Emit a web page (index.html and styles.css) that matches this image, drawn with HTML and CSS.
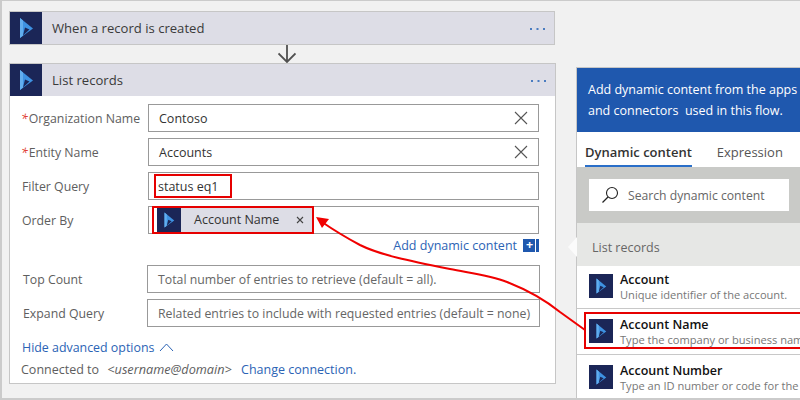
FILE: index.html
```html
<!DOCTYPE html>
<html>

<head>
    <title>List records</title>
    <link rel="stylesheet" href="styles.css">
</head>

<body>
    <svg width="0" height="0" class="defs">
        <symbol id="dynamics" viewBox="0 0 32 32">
            <rect width="32" height="32" fill="#1b2657"/>
            <polygon points="10,6 23,16.5 10,26" fill="#3e92e2"/>
            <polygon points="10,6 13,8.500 13,23.500 10,26" fill="#62aeef"/>
            <polygon points="13,23.500 19.500,17.500 15,15.500" fill="#1b2657"/>
        </symbol>
        <symbol id="more" viewBox="0 0 16 2">
            <rect x="0" width="2" height="2" fill="#4a7cc0"/>
            <rect x="6.500" width="2" height="2" fill="#4a7cc0"/>
            <rect x="13" width="2" height="2" fill="#4a7cc0"/>
        </symbol>
    </svg>

    <div class="page">
        <div class="flow">
            <div class="card">
                <div class="card-head">
                    <svg class="logo"><use href="#dynamics"/></svg>
                    <span class="card-title">When a record is created</span>
                    <svg class="dots"><use href="#more"/></svg>
                </div>
            </div>

            <div class="connector">
                <svg width="18" height="18" viewBox="0 0 18 18">
                    <path d="M9 0V17M0.500 8.500L9 17L17.500 8.500" fill="none" stroke="#505050" stroke-width="1.800"/>
                </svg>
            </div>

            <div class="card card-open">
                <div class="card-head">
                    <svg class="logo"><use href="#dynamics"/></svg>
                    <span class="card-title">List records</span>
                    <svg class="dots"><use href="#more"/></svg>
                </div>
                <div class="card-body">
                    <div class="row">
                        <label><i>*</i>Organization Name</label>
                        <div class="field">Contoso
                            <svg class="clear" viewBox="0 0 14 14"><path d="M1 1L13 13M13 1L1 13"/></svg>
                        </div>
                    </div>
                    <div class="row">
                        <label><i>*</i>Entity Name</label>
                        <div class="field">Accounts
                            <svg class="clear" viewBox="0 0 14 14"><path d="M1 1L13 13M13 1L1 13"/></svg>
                        </div>
                    </div>
                    <div class="row">
                        <label>Filter Query</label>
                        <div class="field"><span class="mark-text">status eq1</span></div>
                    </div>
                    <div class="row">
                        <label>Order By</label>
                        <div class="field field-token">
                            <span class="mark-token">
                                <span class="token">
                                    <svg class="token-logo"><use href="#dynamics"/></svg>
                                    <span class="token-name">Account Name</span>
                                    <svg class="token-x" viewBox="0 0 8 8"><path d="M1 1L7 7M7 1L1 7"/></svg>
                                </span>
                            </span>
                        </div>
                    </div>
                    <div class="add-row">
                        <a class="link">Add dynamic content</a>
                        <span class="add-btn">+</span>
                    </div>
                    <div class="row row-wide">
                        <label>Top Count</label>
                        <div class="field hint">Total number of entries to retrieve (default = all).</div>
                    </div>
                    <div class="row row-wide">
                        <label>Expand Query</label>
                        <div class="field hint">Related entries to include with requested entries (default = none)</div>
                    </div>
                    <div class="advanced">
                        <a class="link">Hide advanced options</a>
                        <svg width="15" height="9" viewBox="0 0 15 9"><path d="M1 8L7.500 1L14 8" fill="none" stroke="#2b63b5"/></svg>
                    </div>
                    <div class="connected">
                        Connected to <em>&lt;username@domain&gt;</em> <a class="link">Change connection.</a>
                    </div>
                </div>
            </div>
        </div>

        <div class="panel">
            <div class="panel-head">Add dynamic content from the apps<br>and connectors&nbsp; used in this flow.</div>
            <div class="tabs">
                <span class="tab tab-on">Dynamic content</span>
                <span class="tab">Expression</span>
            </div>
            <div class="search-wrap">
                <div class="search">
                    <svg width="18" height="18" viewBox="0 0 18 18">
                        <circle cx="11" cy="7" r="5.500" fill="none" stroke="#222" stroke-width="1.100"/>
                        <path d="M7 11L1.500 16.500" stroke="#222" stroke-width="1.300"/>
                    </svg>
                    <span>Search dynamic content</span>
                </div>
            </div>
            <div class="list-head">List records</div>
            <div class="item">
                <svg class="item-logo"><use href="#dynamics"/></svg>
                <div class="item-text">
                    <b>Account</b>
                    <span>Unique identifier of the account.</span>
                </div>
            </div>
            <div class="item item-marked">
                <svg class="item-logo"><use href="#dynamics"/></svg>
                <div class="item-text">
                    <b>Account Name</b>
                    <span>Type the company or business name.</span>
                </div>
            </div>
            <div class="item item-last">
                <svg class="item-logo"><use href="#dynamics"/></svg>
                <div class="item-text">
                    <b>Account Number</b>
                    <span>Type an ID number or code for the account.</span>
                </div>
            </div>
        </div>

        <!-- red callout from the list item back to the field -->
        <svg class="callout" width="800" height="400" viewBox="0 0 800 400">
            <path d="M585 330L560 312C545 300 530 291 507 282C490 275 470 273 450 269C410 261 380 255 360 245C345 237 335 231 322 222" fill="none" stroke="#f00000" stroke-width="2"/>
            <polygon points="316,217 329,219 322,228" fill="#f00000"/>
        </svg>
    </div>
</body>

</html>
```

FILE: styles.css
```css
html, body {
    margin: 0;
    height: 100%;
    overflow: hidden;
}

body {
    font-family: "Open Sans", "Noto Sans", sans-serif;
    font-size: 12.5px;
    color: #444;
}

.defs {
    display: none;
}

.page {
    position: relative;
    display: flex;
    box-sizing: border-box;
    width: 800px;
    height: 400px;
    overflow: hidden;
    background-color: #f1f1f1;
    border-top: 1px solid #cbcbcb;
    border-left: 2px solid #cbcbcb;
    border-bottom: 2px solid #cbcbcb;
}

.flow {
    width: 547px;
    margin: 10px 0 0 7px;
    flex-shrink: 0;
}

/* cards */
.card {
    width: 546px;
    box-sizing: border-box;
    border: 1px solid #c6c6c6;
}

.card-open {
    width: 547px;
    background-color: #fff;
}

.card-head {
    display: flex;
    align-items: center;
    height: 32px;
    background-color: #dddde6;
}

.logo {
    width: 32px;
    height: 32px;
}

.card-title {
    margin-left: 10px;
    font-size: 13.1px;
    color: #3a3a3a;
}

.dots {
    width: 16px;
    height: 2px;
    margin-left: auto;
    margin-right: 8px;
    margin-top: 1px;
}

.connector {
    display: flex;
    height: 18px;
    padding-left: 269px;
}

.card-body {
    box-sizing: border-box;
    height: 287px;
    padding: 8px 0 0 12px;
}

/* form rows */
.row {
    display: flex;
    align-items: center;
    height: 28px;
    margin-bottom: 6px;
}

.row label {
    width: 126px;
    font-size: 12.3px;
    color: #5e5e5e;
}

.row label i {
    margin-left: -1px;
    margin-right: 1px;
    color: #e0352b;
}

.field {
    display: flex;
    align-items: center;
    box-sizing: border-box;
    width: 391px;
    height: 28px;
    padding: 0 10px;
    background-color: #fff;
    border: 1px solid #999;
    color: #333;
}

.clear {
    width: 14px;
    height: 14px;
    margin-left: auto;
    fill: none;
    stroke: #555;
    stroke-width: 1.100;
}

.mark-text {
    margin-left: -5px;
    padding: 2px 11px 1px 2px;
    border: 2px solid #e60000;
}

.field-token {
    padding: 0 0 0 3px;
}

.mark-token {
    display: block;
    margin-top: -1px;
    border: 2px solid #e60000;
}

.token {
    display: flex;
    align-items: center;
    width: 155px;
    height: 24px;
    margin-left: 3px;
    background-color: #dddde6;
}

.token-logo {
    width: 24px;
    height: 24px;
}

.token-name {
    margin-left: 13px;
}

.token-x {
    width: 8px;
    height: 8px;
    margin-left: auto;
    margin-right: 8px;
    fill: none;
    stroke: #444;
    stroke-width: 1.100;
}

.link {
    color: #2b63b5;
}

.add-row {
    display: flex;
    align-items: center;
    justify-content: flex-end;
    height: 12px;
    width: 517px;
    margin-top: -1px;
    margin-bottom: 14px;
}

.add-btn {
    box-sizing: border-box;
    width: 16px;
    height: 13px;
    margin-left: 6px;
    padding-right: 3px;
    line-height: 12px;
    text-align: center;
    font-weight: 700;
    color: #fff;
    background-color: #1f58ae;
    box-shadow: inset -3px 0 0 #1f58ae, inset -4px 0 0 #fff;
}

.row-wide {
    margin-left: 1px;
}

.row-wide label {
    width: 124px;
}

.row-wide .field {
    width: 393px;
    font-size: 12.3px;
}

.hint {
    white-space: nowrap;
    color: #666;
}

.advanced {
    display: flex;
    align-items: center;
    gap: 5px;
    margin: 12px 0 0 0;
    font-size: 12.4px;
}

.connected {
    margin: 4px 0 0 -1px;
    color: #5e5e5e;
}

.connected em {
    margin: 0 6px 0 5px;
    font-size: 12.7px;
}

/* dynamic content panel */
.panel {
    position: relative;
    width: 224px;
    margin: 66px 0 0 20px;
    flex-shrink: 0;
    border-top: 1px solid #c6c6c6;
    border-left: 1px solid #c6c6c6;
    background-color: #fff;
}

.panel-head {
    box-sizing: border-box;
    height: 64px;
    padding: 11px 0 0 11px;
    line-height: 21px;
    white-space: nowrap;
    font-weight: 500;
    color: #fff;
    background-color: #1f58ae;
}

.tabs {
    display: flex;
    gap: 25px;
    height: 35px;
    padding-left: 8px;
    font-size: 13px;
    color: #555;
}

.tab {
    box-sizing: border-box;
    height: 35px;
    padding-top: 11px;
}

.tab-on {
    font-weight: 600;
    color: #333;
    border-bottom: 2px solid #2a6fc9;
}

.search-wrap {
    height: 32px;
    padding: 12px;
    background-color: #c9cac7;
}

.search {
    display: flex;
    align-items: center;
    gap: 9px;
    height: 32px;
    padding-left: 12px;
    font-size: 12.2px;
    background-color: #fff;
    color: #666;
}

.list-head {
    box-sizing: border-box;
    height: 43px;
    padding: 16px 0 0 15px;
    background-color: #e6e7e5;
    color: #666;
}

/* little arrow pointing at the add link */
.list-head::before {
    content: "";
    position: absolute;
    left: -9px;
    top: 169px;
    border-top: 10px solid transparent;
    border-bottom: 10px solid transparent;
    border-right: 9px solid #fbfbfb;
}

.item {
    display: flex;
    gap: 7px;
    box-sizing: border-box;
    height: 43px;
    padding: 8px 0 0 12px;
    border-bottom: 1px solid #c8c8c8;
}

.item-logo {
    width: 24px;
    height: 24px;
    flex-shrink: 0;
}

.item-text {
    display: flex;
    flex-direction: column;
    margin-top: -2px;
    line-height: 15px;
    white-space: nowrap;
}

.item-text b {
    font-weight: 600;
    color: #111;
}

.item-text span {
    font-size: 11.1px;
    color: #777;
}

.item-marked {
    height: 37px;
    margin: 3px -10px 5px 7px;
    padding: 5px 0 0 3px;
    border: 2px solid #e60000;
}

.item-last {
    height: 45px;
    padding-top: 10px;
    border-top: 1px solid #c8c8c8;
    border-bottom: 0;
}

.callout {
    position: absolute;
    left: -2px;
    top: -1px;
    pointer-events: none;
}
```
